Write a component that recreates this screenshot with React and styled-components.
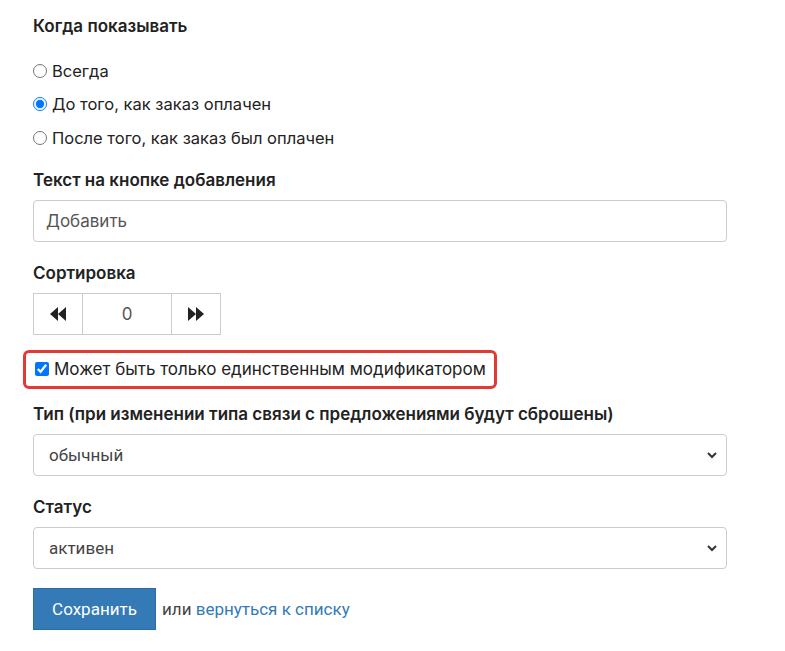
import React from "react";
import styled, { createGlobalStyle } from "styled-components";

const Global = createGlobalStyle`
  body { margin: 0; background: #fff; font-family: Inter, "Noto Sans", sans-serif; color: #222; }
`;

const Form = styled.div`
  padding: 13px 0 0 33px;
  width: 694px;
`;

const Label = styled.div`
  font-weight: 600;
  font-size: 17px;
  line-height: 26px;
  margin: ${(p) => p.mt || 0}px 0 7px;
`;

const Radios = styled.div`
  margin: 15px 0 12px;
`;

const Radio = styled.label`
  display: flex;
  align-items: center;
  gap: 5px;
  font-size: 16.5px;
  height: 33.5px;
  input { margin: 0; width: 14px; height: 14px; }
`;

const Input = styled.input`
  box-sizing: border-box;
  width: 100%;
  height: 42px;
  border: 1px solid #ccc;
  border-radius: 4px;
  padding: 0 12px;
  font: 17px Inter, sans-serif;
  color: #555;
`;

const Stepper = styled.div`
  display: flex;
  width: 188px;
  height: 42px;
  border: 1px solid #ccc;
  box-sizing: border-box;
`;

const StepBtn = styled.div`
  width: 48px;
  display: flex;
  align-items: center;
  justify-content: center;
  border-${(p) => p.side}: 1px solid #ccc;
`;

const StepValue = styled.div`
  flex: 1;
  display: flex;
  align-items: center;
  justify-content: center;
  font: 17px Inter, sans-serif;
  color: #555;
`;

const Highlight = styled.div`
  margin: 15px 0 0 -10px;
  width: 474px;
  height: 39px;
  box-sizing: border-box;
  border: 3px solid #e03a33;
  border-radius: 6px;
  display: flex;
  align-items: center;
  gap: 5px;
  padding-left: 9px;
  font-size: 17px;
  input { margin: 0; width: 14px; height: 14px; }
`;

const Select = styled.div`
  box-sizing: border-box;
  height: 42px;
  border: 1px solid #ccc;
  border-radius: 4px;
  display: flex;
  align-items: center;
  justify-content: space-between;
  padding: 0 8px 0 15px;
  font: 17px Roboto, sans-serif;
  color: #444;
`;

const Actions = styled.div`
  display: flex;
  align-items: center;
  gap: 6px;
  margin-top: 19px;
  font: 17px Roboto, sans-serif;
  color: #444;
`;

const SaveButton = styled.button`
  background: #337ab7;
  color: #fff;
  border: 1px solid #2e6da4;
  height: 42px;
  width: 123px;
  font: 17px Roboto, sans-serif;
`;

const Link = styled.a`
  color: #337ab7;
  text-decoration: none;
`;

const Chevron = () => (
  <svg width="12" height="12" viewBox="0 0 12 12">
    <path d="M2 4l4 4 4-4" fill="none" stroke="#333" strokeWidth="2" />
  </svg>
);

const Arrows = ({ dir }) => (
  <svg width="18" height="14" viewBox="0 0 18 14" style={{ transform: dir === "left" ? "scaleX(-1)" : "none" }}>
    <path d="M1 0l8 7-8 7zM9 0l8 7-8 7z" fill="#222" />
  </svg>
);

export default function App() {
  return (
    <>
      <Global />
      <Form>
        <Label>Когда показывать</Label>
        <Radios>
          <Radio><input type="radio" name="w" />Всегда</Radio>
          <Radio><input type="radio" name="w" defaultChecked />До того, как заказ оплачен</Radio>
          <Radio><input type="radio" name="w" />После того, как заказ был оплачен</Radio>
        </Radios>
        <Label>Текст на кнопке добавления</Label>
        <Input defaultValue="Добавить" />
        <Label mt={18}>Сортировка</Label>
        <Stepper>
          <StepBtn side="right"><Arrows dir="left" /></StepBtn>
          <StepValue>0</StepValue>
          <StepBtn side="left"><Arrows /></StepBtn>
        </Stepper>
        <Highlight><input type="checkbox" defaultChecked />Может быть только единственным модификатором</Highlight>
        <Label mt={12}>Тип (при изменении типа связи с предложениями будут сброшены)</Label>
        <Select>обычный<Chevron /></Select>
        <Label mt={18}>Статус</Label>
        <Select>активен<Chevron /></Select>
        <Actions>
          <SaveButton>Сохранить</SaveButton>
          <span>или <Link href="#">вернуться к списку</Link></span>
        </Actions>
      </Form>
    </>
  );
}
